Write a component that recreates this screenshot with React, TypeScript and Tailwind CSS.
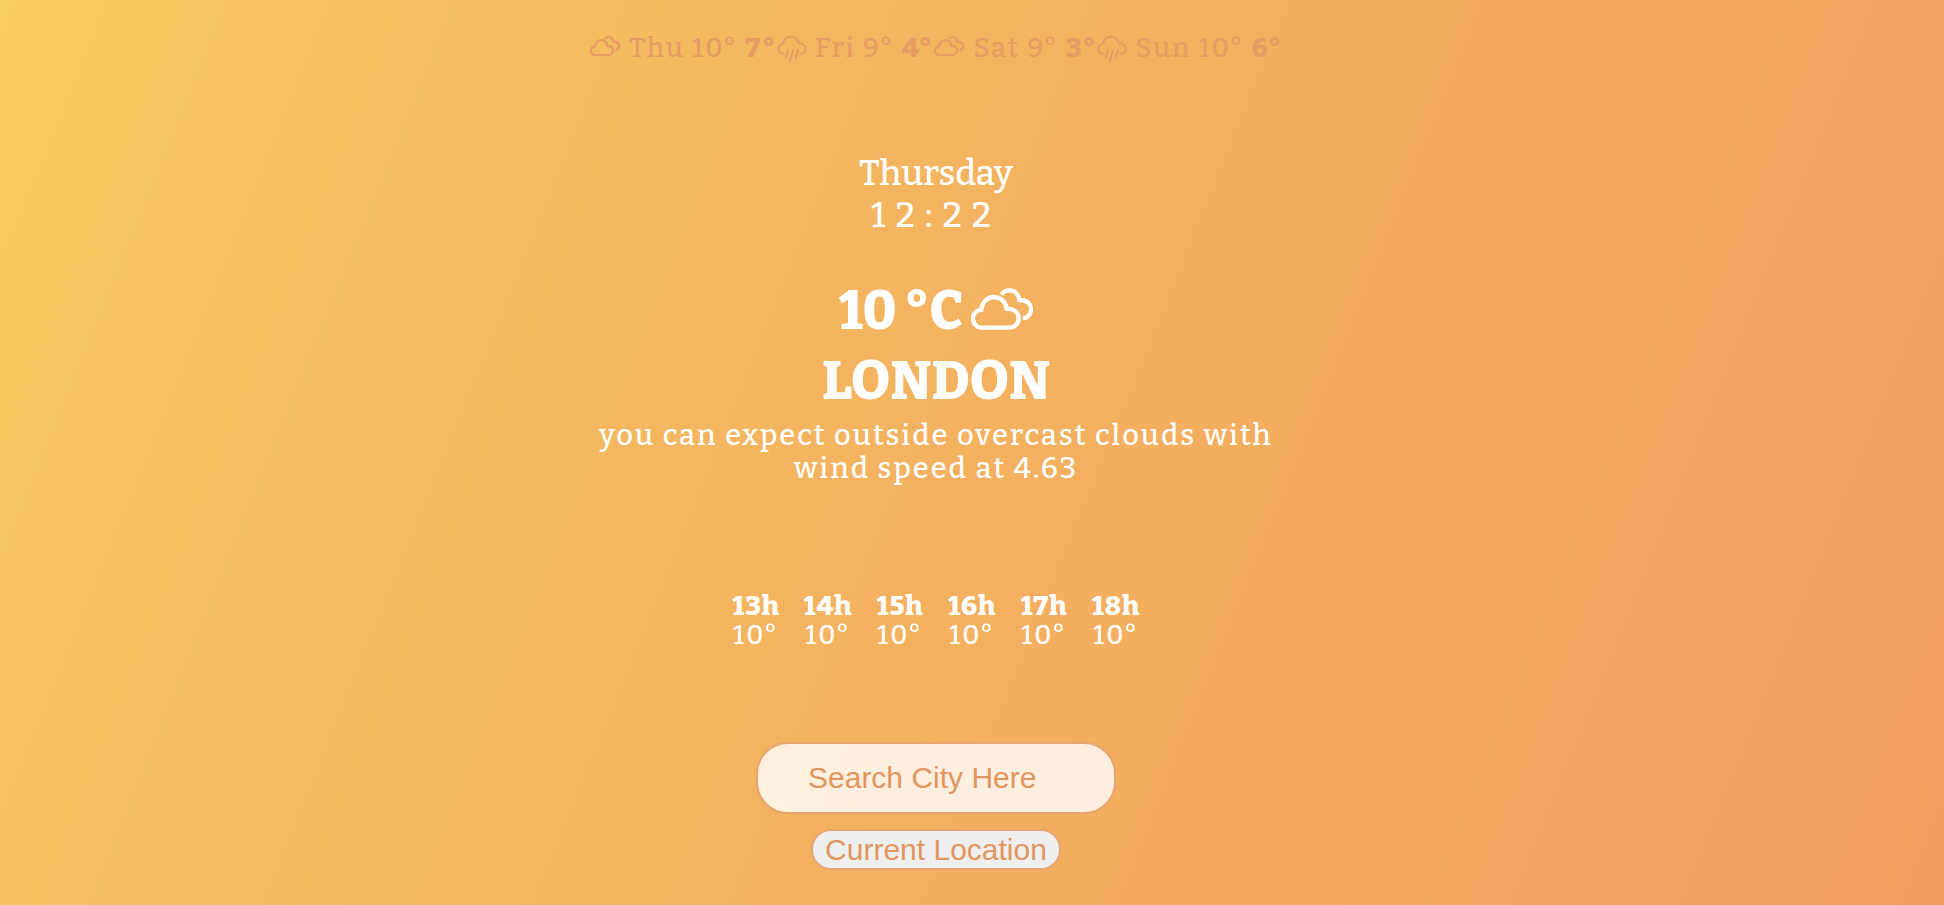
import React from "react";

const serif = "font-['Bitter','DejaVu_Serif_Condensed','DejaVu_Serif',serif]";

function CloudsIcon({ className, stroke }: { className: string; stroke: number }) {
  return (
    <svg viewBox="0 0 186 124" className={className} fill="none" stroke="currentColor" strokeWidth={stroke} aria-hidden="true">
      <path d="M33 118 C17 118 6 106 6 91 C6 76 16 66 31 64 C33 42 48 26 69 26 C89 26 104 40 107 61 C129 61 143 72 143 90 C143 106 131 118 114 118 Z" />
      <path d="M91 19 C97 10 105 6 115 6 C131 6 143 18 145 35 C165 34 180 45 180 62 C180 78 170 89 155 89" />
    </svg>
  );
}

function RainIcon({ className }: { className: string }) {
  return (
    <svg viewBox="0 0 90 90" className={className} fill="none" stroke="currentColor" strokeWidth="6" strokeLinecap="round" aria-hidden="true">
      <path d="M18 56 C9 54 4 49 4 41 C4 33 10 27 18 26 C20 13 29 5 42 5 C54 5 63 12 65 25 C78 25 86 32 86 42 C86 51 80 56 70 56" />
      <path d="M33 46 L26 70 M48 46 L38 82 M63 46 L56 70" />
    </svg>
  );
}

const days = [
  { day: "Thu", high: "10°", low: "7°", rain: false },
  { day: "Fri", high: "9°", low: "4°", rain: true },
  { day: "Sat", high: "9°", low: "3°", rain: false },
  { day: "Sun", high: "10°", low: "6°", rain: true },
];

const hours = ["13h", "14h", "15h", "16h", "17h", "18h"];

export default function App() {
  return (
    <div className={`min-h-screen bg-[linear-gradient(112deg,#f8cd61_0%,#f6c260_16%,#f4b660_38%,#f3ac5f_65%,#f19d5e_100%)] pr-[72px] text-white ${serif}`}>
      <main className="mx-auto flex max-w-3xl flex-col items-center pt-7 pb-8">
        <ul className="flex h-10 items-center whitespace-nowrap text-[27px] leading-10 font-medium tracking-[2px] text-[#e59b62]">
          {days.map((d) => (
            <li key={d.day} className="flex items-center">
              {d.rain ? <RainIcon className="mt-1 mr-2 h-[30px] w-[30px]" /> : <CloudsIcon stroke={14} className="mr-2 mb-1 h-5 w-8" />}
              <span>
                {d.day} {d.high} <b className="font-extrabold">{d.low}</b>
              </span>
            </li>
          ))}
        </ul>

        <div className="mt-[84px] text-center text-[35px] leading-[42px] font-medium">
          <p>Thursday</p>
          <p className="tracking-[10px]">12:22</p>
        </div>

        <h2 className="mt-10 flex items-center gap-2 text-[54px] leading-[70px] font-extrabold">
          <span>10 °C</span>
          <CloudsIcon stroke={13} className="mb-1 h-[42px] w-[62px]" />
        </h2>
        <h1 className="text-[54px] leading-[70px] font-extrabold">LONDON</h1>
        <p className="mt-[3px] max-w-[720px] text-center text-[29px] leading-[33px] font-medium tracking-[2px]">
          you can expect outside overcast clouds with
          <br />
          wind speed at 4.63
        </p>

        <ul className="mt-[107px] flex gap-[22px] text-[27px] leading-[29px] font-medium">
          {hours.map((h) => (
            <li key={h} className="flex w-[50px] flex-col items-center">
              <b className="font-extrabold tracking-[1px]">{h}</b>
              <span className="tracking-[2px]">10°</span>
            </li>
          ))}
        </ul>

        <form className="mt-[92px] flex flex-col items-center gap-[15px] font-['Liberation_Sans',Arial,sans-serif] text-[30px]" onSubmit={(e) => e.preventDefault()}>
          <input
            type="text"
            aria-label="Search city"
            placeholder="Search City Here"
            className="h-[72px] w-[360px] rounded-[32px] border-2 border-[#e7a570] bg-[#fff]/80 px-[50px] text-[#e2955c] outline-none placeholder:text-[#e2955c]"
          />
          <button type="button" className="h-[41px] rounded-[20px] border-2 border-[#e7a570] bg-[#efefef] px-3 leading-9 text-[#e2955c]">
            Current Location
          </button>
        </form>
      </main>
    </div>
  );
}
